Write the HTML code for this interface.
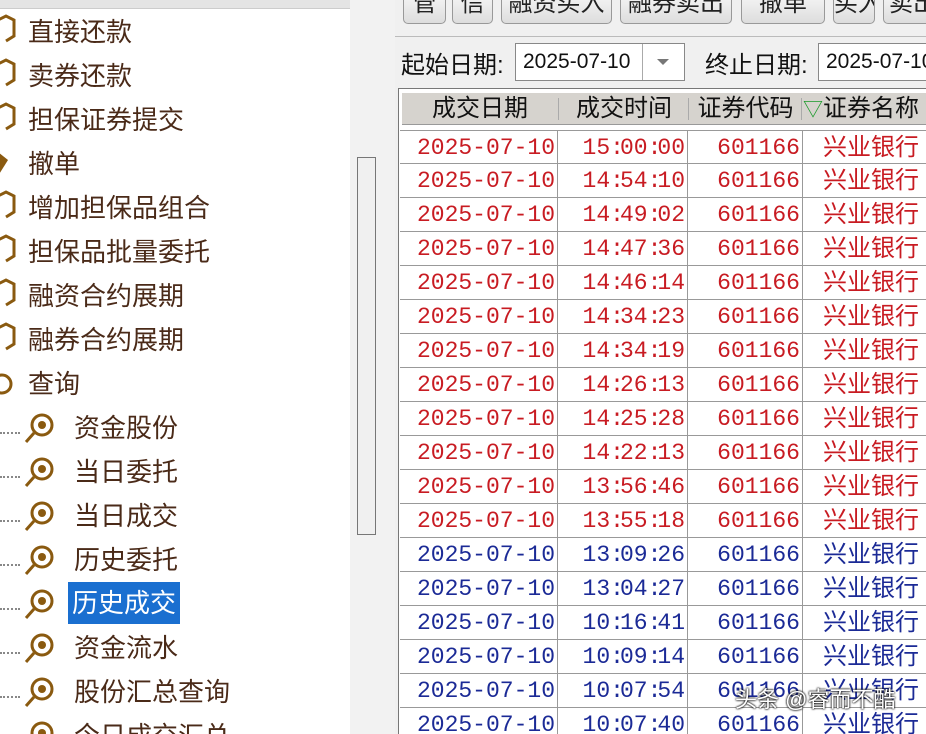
<!DOCTYPE html>
<html style="overflow:hidden;height:734px"><head><meta charset="utf-8"><style>
*{margin:0;padding:0;box-sizing:border-box}
body{width:926px;height:734px;overflow:hidden;position:relative;background:#f0f0f0;font-family:"Liberation Sans","Noto Sans CJK SC",sans-serif}
#left{position:absolute;left:0;top:0;width:350px;height:734px;background:#fff}
#topbar{position:absolute;left:0;top:0;width:385px;height:9px;background:#e4e4e4;border-bottom:1px solid #ccc}
.it{position:absolute;font-size:26px;color:#4a2a18;line-height:30px;white-space:nowrap}
.dot{position:absolute;left:0;width:20px;border-top:2px dotted #888}
.sel{background:#1a6fd0;color:#fff;padding:0 4px}
#strip{position:absolute;left:350px;top:0;width:45px;height:734px;background:#f2f2f2}
#thumb{position:absolute;left:357px;top:157px;width:19px;height:378px;border:1px solid #777;background:#f0f0f0}
.btn{position:absolute;top:-12px;height:36px;border:1px solid #999;border-radius:5px;background:linear-gradient(#fafafa,#ddd);font-size:24px;text-align:center;line-height:30px;color:#222;white-space:nowrap;overflow:hidden}
#tbline{position:absolute;left:395px;top:36px;width:531px;border-top:1px solid #bbb}
.lbl{position:absolute;top:45px;font-size:24px;color:#111}
.inp{position:absolute;top:43px;height:38px;background:#fff;border:1px solid #888;font-size:21px;line-height:36px;padding-left:7px;color:#111;white-space:nowrap;overflow:hidden}
#table{position:absolute;left:398px;top:88px;width:540px;height:660px;border:1px solid #777;background:#fff}
#hdr{position:absolute;left:402px;top:93px;width:530px;height:32px;background:#d6d3ce;border-bottom:1px solid #999}
.h{position:absolute;top:93px;font-size:24px;line-height:32px;color:#111;text-align:center;white-space:nowrap}
.row{position:absolute;left:400px;width:530px;height:34px;border-bottom:1px solid #999;font-family:"Liberation Mono","Noto Sans CJK SC",monospace;font-size:23px;line-height:34px}
.row span{position:absolute;top:0;height:34px;border-right:1px solid #999;text-align:right}
.r{color:#c81b22}.b{color:#1b2a96}
.row span.n{font-family:"Liberation Sans","Noto Sans CJK SC",sans-serif;font-size:24px;text-align:left;padding-left:20px;border:none}
#wm{position:absolute;left:735px;top:682px;font-size:22px;color:#fff;text-shadow:0 0 2px #000,0 0 2px #000}
</style></head><body>
<div id="left"></div>
<div id="topbar"></div>
<div id="strip"></div><div id="thumb"></div>

<svg style="position:absolute;left:0;top:0" width="60" height="734">
<g fill="none" stroke="#8a5a10" stroke-width="3">
<path d="M-2 20 l8 -4 8 4 v16 l-8 5"/><path d="M-2 64 l8 -4 8 4 v16 l-8 5"/><path d="M-2 108 l8 -4 8 4 v16 l-8 5"/>
<path d="M-2 196 l8 -4 8 4 v16 l-8 5"/><path d="M-2 240 l8 -4 8 4 v16 l-8 5"/><path d="M-2 284 l8 -4 8 4 v16 l-8 5"/><path d="M-2 328 l8 -4 8 4 v16 l-8 5"/>
<circle cx="2" cy="384" r="9"/>
</g>
<path d="M-2 152 l10 8 -10 16 z" fill="#8a5a10"/>
<g fill="none" stroke="#8a5a10" stroke-width="3">
<g id="mg"><circle cx="42" cy="425" r="10"/><path d="M34 433 l-8 9"/><circle cx="42" cy="425" r="4" fill="#8a5a10" stroke="none"/></g>
<use href="#mg" y="44"/><use href="#mg" y="88"/><use href="#mg" y="132"/><use href="#mg" y="176"/><use href="#mg" y="220"/><use href="#mg" y="264"/><use href="#mg" y="308"/>
</g>
</svg>
<div class="it" style="left:28px;top:17px">直接还款</div>
<div class="it" style="left:28px;top:61px">卖券还款</div>
<div class="it" style="left:28px;top:105px">担保证券提交</div>
<div class="it" style="left:28px;top:149px">撤单</div>
<div class="it" style="left:28px;top:193px">增加担保品组合</div>
<div class="it" style="left:28px;top:237px">担保品批量委托</div>
<div class="it" style="left:28px;top:281px">融资合约展期</div>
<div class="it" style="left:28px;top:325px">融券合约展期</div>
<div class="it" style="left:28px;top:369px">查询</div>
<div class="dot" style="top:432px"></div><div class="dot" style="top:476px"></div><div class="dot" style="top:520px"></div><div class="dot" style="top:564px"></div><div class="dot" style="top:608px"></div><div class="dot" style="top:652px"></div><div class="dot" style="top:696px"></div>
<div class="it" style="left:74px;top:413px">资金股份</div>
<div class="it" style="left:74px;top:457px">当日委托</div>
<div class="it" style="left:74px;top:501px">当日成交</div>
<div class="it" style="left:74px;top:545px">历史委托</div>
<div class="it" style="left:68px;top:582px;height:42px;line-height:42px"><span class="sel" style="display:block">历史成交</span></div>
<div class="it" style="left:74px;top:633px">资金流水</div>
<div class="it" style="left:74px;top:677px">股份汇总查询</div>
<div class="it" style="left:74px;top:721px">今日成交汇总</div>

<div class="btn" style="left:403px;width:43px">管</div>
<div class="btn" style="left:452px;width:41px">信</div>
<div class="btn" style="left:501px;width:111px">融资买入</div>
<div class="btn" style="left:620px;width:112px">融券卖出</div>
<div class="btn" style="left:741px;width:84px">撤单</div>
<div class="btn" style="left:833px;width:42px">买入</div>
<div class="btn" style="left:883px;width:60px">卖出</div>
<div id="tbline"></div>

<div class="lbl" style="left:401px">起始日期:</div>
<div class="inp" style="left:515px;width:170px">2025-07-10</div>
<div style="position:absolute;left:642px;top:44px;width:42px;height:36px;border-left:1px solid #aaa;background:#fff"></div>
<div style="position:absolute;left:657px;top:59px;border-left:6px solid transparent;border-right:6px solid transparent;border-top:6px solid #777"></div>
<div class="lbl" style="left:705px">终止日期:</div>
<div class="inp" style="left:818px;width:120px">2025-07-10</div>

<div id="table"></div>
<div id="hdr"></div>
<div class="h" style="left:402px;width:156px">成交日期</div>
<div class="h" style="left:560px;width:128px">成交时间</div>
<div class="h" style="left:688px;width:115px">证券代码</div>
<div class="h" style="left:803px;width:130px;text-align:left"><span style="color:#1a9a2a;font-size:20px">▽</span>证券名称</div>
<div style="position:absolute;left:558px;top:98px;height:22px;border-left:1px solid #aaa"></div>
<div style="position:absolute;left:688px;top:98px;height:22px;border-left:1px solid #aaa"></div>
<div style="position:absolute;left:801px;top:98px;height:22px;border-left:1px solid #aaa"></div>

<div id="rows"></div>
<script>
var t=["15:00:00","14:54:10","14:49:02","14:47:36","14:46:14","14:34:23","14:34:19","14:26:13","14:25:28","14:22:13","13:56:46","13:55:18","13:09:26","13:04:27","10:16:41","10:09:14","10:07:54","10:07:40"];
var h="";
for(var i=0;i<t.length;i++){var c=i<12?"r":"b";var y=130+i*34;
h+='<div class="row '+c+'" style="top:'+y+'px;border-top:'+(i==0?'1px solid #999':'none')+'"><span style="left:0;width:158px;padding-right:2px">2025-07-10</span><span style="left:158px;width:130px;padding-right:2px">'+t[i].replace(/:/g,'<span style="position:static;border:none;letter-spacing:-4px">:</span>')+'</span><span style="left:288px;width:115px;padding-right:2px">601166</span><span class="n" style="left:403px;width:130px">兴业银行</span></div>';}
document.getElementById("rows").innerHTML=h;
</script>
<div id="wm">头条 @睿而不酷</div>
</body></html>
